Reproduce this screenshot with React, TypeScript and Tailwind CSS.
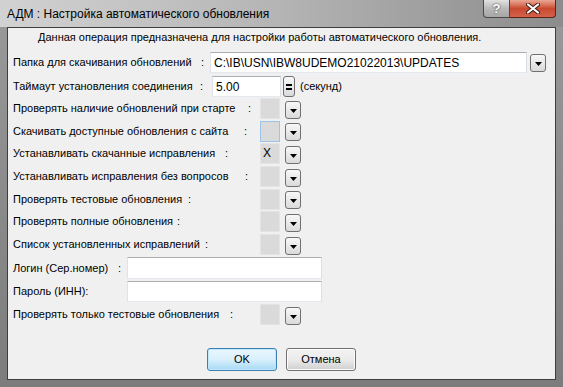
import React from "react";

const DropBtn = ({ className = "" }: { className?: string }) => (
  <div
    className={`flex h-[18px] w-[16px] shrink-0 items-center justify-center rounded-[3px] border border-[#707070] bg-linear-to-b from-[#f8f8f8] to-[#dadada] ${className}`}
  >
    <svg width="7" height="4" viewBox="0 0 7 4" className="mt-[2px]">
      <path d="M0 0h7L3.5 4z" fill="#000" />
    </svg>
  </div>
);

const Check = ({ value = "", focused = false }: { value?: string; focused?: boolean }) => (
  <div className="flex items-center">
    <div
      className={`h-[21px] w-[20px] border bg-[#dadada] pl-[2px] text-[12px] leading-[19px] ${
        focused ? "border-[#9cc3e8]" : "border-[#e4e4e4]"
      }`}
    >
      {value}
    </div>
    <DropBtn className="ml-[5px] mt-[2px]" />
  </div>
);

type RowProps = {
  label: string;
  colW: string;
  labelW?: string;
  colon?: boolean;
  h: string;
  children: React.ReactNode;
};

const Row = ({ label, colW, labelW = "", colon = true, h, children }: RowProps) => (
  <div className={`flex items-center ${h}`}>
    <div className={`flex shrink-0 ${colW}`}>
      <span className={`shrink-0 whitespace-nowrap ${labelW}`}>{label}</span>
      {colon && <span>:</span>}
    </div>
    {children}
  </div>
);

const TextBox = ({ className, value = "" }: { className: string; value?: string }) => (
  <div
    className={`flex items-center border border-[#abadb3] border-l-[#e2e3ea] border-r-[#dbdfe6] border-b-[#e3e9ef] bg-white pl-[3px] text-[12px] ${className}`}
  >
    {value}
  </div>
);

const App = () => {
  return (
    <div className="flex h-[387px] w-[563px] flex-col bg-linear-to-b from-[#9a9a9a] to-[#7c7c7c] font-['Liberation_Sans',Arial,sans-serif] text-[11px] text-black">
      {/* title bar */}
      <div className="flex h-[27px] shrink-0 bg-linear-to-r from-[#d2d2d2] via-[#b4b4b4] to-[#8c8c8c]">
        <div className="flex flex-1 items-center pl-[7px] text-[12px] leading-none">
          АДМ : Настройка автоматического обновления
        </div>
        <div className="mr-[7px] flex h-[18px] items-stretch">
          <div className="flex w-[27px] items-center justify-center rounded-bl-[4px] border border-t-0 border-[#4a4a4a] bg-linear-to-b from-[#e2e2e2] via-[#b9b9b9] to-[#a6a6a6] text-[13px] font-bold leading-none text-white [text-shadow:0_0_2px_#222]">
            ?
          </div>
          <div className="flex w-[46px] items-center justify-center rounded-br-[4px] border border-l-0 border-t-0 border-[#5a2418] bg-linear-to-b from-[#e9a795] via-[#c94a30] to-[#d4614a]">
            <svg width="14" height="11" viewBox="0 0 14 11">
              <path
                d="M2 1.5L12 9.5M12 1.5L2 9.5"
                stroke="#3a1a12"
                strokeWidth="4"
                strokeLinecap="round"
              />
              <path
                d="M2 1.5L12 9.5M12 1.5L2 9.5"
                stroke="#fff"
                strokeWidth="2.2"
                strokeLinecap="round"
              />
            </svg>
          </div>
        </div>
      </div>

      {/* client area */}
      <div className="mx-[7px] mb-[7px] flex flex-1 flex-col border border-[#3e3e3e] bg-[#f0f0f0] pl-[5px]">
        <div className="flex h-[19px] items-center pl-[25px]">
          Данная операция предназначена для настройки работы автоматического обновления.
        </div>

        <div className="mt-[5px]">
          <Row label="Папка для скачивания обновлений" labelW="w-[188px]" colW="w-[197px]" h="h-[21px]">
            <TextBox className="h-[21px] w-[317px]" value="C:\IB\USN\IBW8UDEMO21022013\UPDATES" />
            <DropBtn className="ml-[3px]" />
          </Row>
        </div>

        <div className="mt-[3px]">
          <Row label="Таймаут установления соединения" labelW="w-[187px]" colW="w-[199px]" h="h-[21px]">
            <TextBox className="h-[21px] w-[69px]" value="5.00" />
            <div className="ml-[2px] flex h-[21px] w-[12px] items-center justify-center rounded-[3px] border border-[#707070] bg-linear-to-b from-[#f8f8f8] to-[#dadada]">
              <div className="flex flex-col gap-[2px]">
                <div className="h-[2px] w-[6px] bg-black" />
                <div className="h-[2px] w-[6px] bg-black" />
              </div>
            </div>
            <span className="ml-[5px]">(секунд)</span>
          </Row>
        </div>

        <Row label="Проверять наличие обновлений при старте" labelW="w-[235px]" colW="w-[247px]" h="h-[23px]">
          <Check />
        </Row>
        <Row label="Скачивать доступные обновления с сайта" labelW="w-[231px]" colW="w-[247px]" h="h-[22px]">
          <Check focused />
        </Row>
        <Row label="Устанавливать скачанные исправления" labelW="w-[212px]" colW="w-[247px]" h="h-[23px]">
          <Check value="X" />
        </Row>
        <Row label="Устанавливать исправления без вопросов" labelW="w-[232px]" colW="w-[247px]" h="h-[23px]">
          <Check />
        </Row>
        <Row label="Проверять тестовые обновления" labelW="w-[175px]" colW="w-[247px]" h="h-[22px]">
          <Check />
        </Row>
        <Row label="Проверять полные обновления" labelW="w-[164px]" colW="w-[247px]" h="h-[23px]">
          <Check />
        </Row>
        <Row label="Список установленных исправлений" labelW="w-[192px]" colW="w-[247px]" h="h-[23px]">
          <Check />
        </Row>

        <Row label="Логин (Сер.номер)" labelW="w-[105px]" colW="w-[114px]" h="h-[24px]">
          <TextBox className="h-[22px] w-[195px]" />
        </Row>
        <Row label="Пароль (ИНН):" colon={false} colW="w-[114px]" h="h-[23px]">
          <TextBox className="h-[21px] w-[195px]" />
        </Row>
        <Row label="Проверять только тестовые обновления" labelW="w-[217px]" colW="w-[247px]" h="h-[23px]">
          <Check />
        </Row>

        <div className="mt-[22px] flex justify-center gap-[9px] pr-[5px]">
          <button className="h-[23px] w-[70px] rounded-[3px] border border-[#3c7fb1] bg-linear-to-b from-[#eaf6fd] via-[#d9f0fc] to-[#a7d9f5] shadow-[inset_0_0_0_1px_#bfe7fb]">
            OK
          </button>
          <button className="h-[23px] w-[70px] rounded-[3px] border border-[#707070] bg-linear-to-b from-[#f2f2f2] via-[#ebebeb] to-[#cfcfcf] shadow-[inset_0_0_0_1px_#fcfcfc]">
            Отмена
          </button>
        </div>
      </div>
    </div>
  );
};

export default App;
